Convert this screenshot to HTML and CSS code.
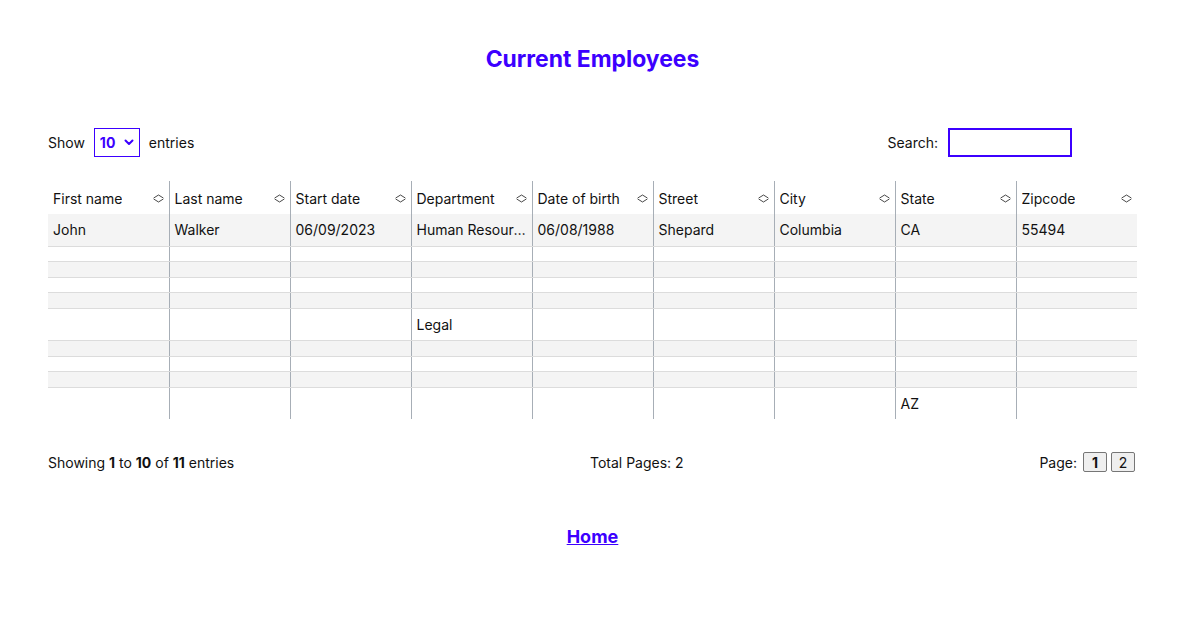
FILE: index.html
```html
<!DOCTYPE html>
<html lang="en">
<head>
<meta charset="utf-8">
<title>Current Employees</title>
<link rel="stylesheet" href="styles.css">
</head>
<body>
<main class="page">
  <h1 class="title">Current Employees</h1>

  <div class="controls">
    <label class="show">
      <span>Show</span>
      <span class="select-wrap">
        <select class="select">
          <option>10</option>
          <option>25</option>
          <option>50</option>
          <option>100</option>
        </select>
        <svg class="select-arrow" width="10" height="7" viewBox="0 0 10 7"><path d="M1.5 1.5 L5 5 L8.5 1.5" fill="none" stroke="#3c00ff" stroke-width="2" stroke-linecap="round" stroke-linejoin="round"/></svg>
      </span>
      <span>entries</span>
    </label>
    <label class="search">
      <span>Search:</span>
      <input class="search-input" type="text">
    </label>
  </div>

  <table class="table">
    <thead>
      <tr>
        <th><div class="th-in"><span>First name</span><svg class="sort" width="11" height="9" viewBox="0 0 11 9"><path d="M1 3.8 L5.5 1 L10 3.8 M1 5.2 L5.5 8 L10 5.2" fill="none" stroke="#333" stroke-width="0.9" stroke-linecap="round" stroke-linejoin="round"/></svg></div></th>
        <th><div class="th-in"><span>Last name</span><svg class="sort" width="11" height="9" viewBox="0 0 11 9"><path d="M1 3.8 L5.5 1 L10 3.8 M1 5.2 L5.5 8 L10 5.2" fill="none" stroke="#333" stroke-width="0.9" stroke-linecap="round" stroke-linejoin="round"/></svg></div></th>
        <th><div class="th-in"><span>Start date</span><svg class="sort" width="11" height="9" viewBox="0 0 11 9"><path d="M1 3.8 L5.5 1 L10 3.8 M1 5.2 L5.5 8 L10 5.2" fill="none" stroke="#333" stroke-width="0.9" stroke-linecap="round" stroke-linejoin="round"/></svg></div></th>
        <th><div class="th-in"><span>Department</span><svg class="sort" width="11" height="9" viewBox="0 0 11 9"><path d="M1 3.8 L5.5 1 L10 3.8 M1 5.2 L5.5 8 L10 5.2" fill="none" stroke="#333" stroke-width="0.9" stroke-linecap="round" stroke-linejoin="round"/></svg></div></th>
        <th><div class="th-in"><span>Date of birth</span><svg class="sort" width="11" height="9" viewBox="0 0 11 9"><path d="M1 3.8 L5.5 1 L10 3.8 M1 5.2 L5.5 8 L10 5.2" fill="none" stroke="#333" stroke-width="0.9" stroke-linecap="round" stroke-linejoin="round"/></svg></div></th>
        <th><div class="th-in"><span>Street</span><svg class="sort" width="11" height="9" viewBox="0 0 11 9"><path d="M1 3.8 L5.5 1 L10 3.8 M1 5.2 L5.5 8 L10 5.2" fill="none" stroke="#333" stroke-width="0.9" stroke-linecap="round" stroke-linejoin="round"/></svg></div></th>
        <th><div class="th-in"><span>City</span><svg class="sort" width="11" height="9" viewBox="0 0 11 9"><path d="M1 3.8 L5.5 1 L10 3.8 M1 5.2 L5.5 8 L10 5.2" fill="none" stroke="#333" stroke-width="0.9" stroke-linecap="round" stroke-linejoin="round"/></svg></div></th>
        <th><div class="th-in"><span>State</span><svg class="sort" width="11" height="9" viewBox="0 0 11 9"><path d="M1 3.8 L5.5 1 L10 3.8 M1 5.2 L5.5 8 L10 5.2" fill="none" stroke="#333" stroke-width="0.9" stroke-linecap="round" stroke-linejoin="round"/></svg></div></th>
        <th><div class="th-in"><span>Zipcode</span><svg class="sort" width="11" height="9" viewBox="0 0 11 9"><path d="M1 3.8 L5.5 1 L10 3.8 M1 5.2 L5.5 8 L10 5.2" fill="none" stroke="#333" stroke-width="0.9" stroke-linecap="round" stroke-linejoin="round"/></svg></div></th>
      </tr>
    </thead>
    <tbody>
      <tr><td>John</td><td>Walker</td><td>06/09/2023</td><td>Human Resources</td><td>06/08/1988</td><td>Shepard</td><td>Columbia</td><td>CA</td><td>55494</td></tr>
      <tr><td></td><td></td><td></td><td></td><td></td><td></td><td></td><td></td><td></td></tr>
      <tr><td></td><td></td><td></td><td></td><td></td><td></td><td></td><td></td><td></td></tr>
      <tr><td></td><td></td><td></td><td></td><td></td><td></td><td></td><td></td><td></td></tr>
      <tr><td></td><td></td><td></td><td></td><td></td><td></td><td></td><td></td><td></td></tr>
      <tr><td></td><td></td><td></td><td>Legal</td><td></td><td></td><td></td><td></td><td></td></tr>
      <tr><td></td><td></td><td></td><td></td><td></td><td></td><td></td><td></td><td></td></tr>
      <tr><td></td><td></td><td></td><td></td><td></td><td></td><td></td><td></td><td></td></tr>
      <tr><td></td><td></td><td></td><td></td><td></td><td></td><td></td><td></td><td></td></tr>
      <tr class="last"><td></td><td></td><td></td><td></td><td></td><td></td><td></td><td>AZ</td><td></td></tr>
    </tbody>
  </table>

  <div class="footer">
    <div>Showing <b>1</b> to <b>10</b> of <b>11</b> entries</div>
    <div>Total Pages: 2</div>
    <div class="pager">
      <span>Page:</span>
      <button class="page-btn current" type="button">1</button>
      <button class="page-btn" type="button">2</button>
    </div>
  </div>

  <nav class="home-nav"><a class="home" href="#">Home</a></nav>
</main>
</body>
</html>
```

FILE: styles.css
```css
* { box-sizing: border-box; }

body {
  margin: 0;
  font-family: Inter, "Noto Sans", "Liberation Sans", sans-serif;
  font-size: 14px;
  color: #111;
  background: #fff;
}

.page {
  padding: 0 48px;
}

.title {
  margin: 0;
  padding-top: 45px;
  font-size: 22.9px;
  line-height: 28px;
  font-weight: 700;
  color: #3c00ff;
  text-align: center;
}

.controls {
  display: flex;
  justify-content: space-between;
  align-items: center;
  margin-top: 55px;
  height: 29px;
}

.show, .search {
  display: flex;
  align-items: center;
  gap: 9px;
}

.search {
  gap: 10px;
  margin-right: 65px;
}

.select-wrap {
  position: relative;
  display: inline-block;
}

.select {
  appearance: none;
  -webkit-appearance: none;
  width: 46px;
  height: 29px;
  border: 1px solid #3c00ff;
  border-radius: 0;
  background: #fff;
  color: #3c00ff;
  font-family: inherit;
  font-size: 14px;
  font-weight: 700;
  padding: 0 0 0 5px;
  display: block;
}

.select-arrow {
  position: absolute;
  right: 6px;
  top: 11px;
  pointer-events: none;
}

.search-input {
  width: 124px;
  height: 29px;
  border: 2px solid #3c00ff;
  border-radius: 0;
  padding: 0 4px;
  font-family: inherit;
  font-size: 14px;
  outline: none;
}

.table {
  width: 100%;
  margin-top: 24px;
  table-layout: fixed;
  border-collapse: collapse;
}

.table th,
.table td {
  padding: 7px 5px 7.5px;
  text-align: left;
  line-height: 17px;
  white-space: nowrap;
  overflow: hidden;
  text-overflow: ellipsis;
  border-left: 1px solid #a7aeb6;
}

.table th:first-child,
.table td:first-child {
  border-left: none;
}

.table th {
  font-weight: 400;
  padding-top: 8.5px;
  padding-bottom: 7.5px;
}

.th-in {
  display: flex;
  justify-content: space-between;
  align-items: center;
}

.th-in span {
  overflow: hidden;
  text-overflow: ellipsis;
}

.sort {
  flex: none;
  margin-right: 0;
}

.table tbody td {
  border-bottom: 1px solid #dcdcdc;
}

.table tbody tr.last td {
  border-bottom: none;
}

.table tbody tr:nth-child(odd) {
  background: #f4f4f4;
}

.footer {
  display: flex;
  justify-content: space-between;
  align-items: center;
  margin-top: 33px;
  height: 20px;
}

.pager {
  display: flex;
  align-items: center;
  gap: 4px;
  margin-right: 2px;
}

.pager span {
  margin-right: 2px;
}

.page-btn {
  width: 24px;
  height: 20px;
  padding: 0;
  border: 1px solid #767676;
  border-radius: 2px;
  background: #efefef;
  font-family: inherit;
  font-size: 14px;
  color: #111;
}

.page-btn.current {
  font-weight: 700;
}

.home-nav {
  text-align: center;
  margin-top: 54px;
}

.home {
  font-size: 18px;
  font-weight: 700;
  line-height: 22px;
  color: #3c00ff;
}
```
